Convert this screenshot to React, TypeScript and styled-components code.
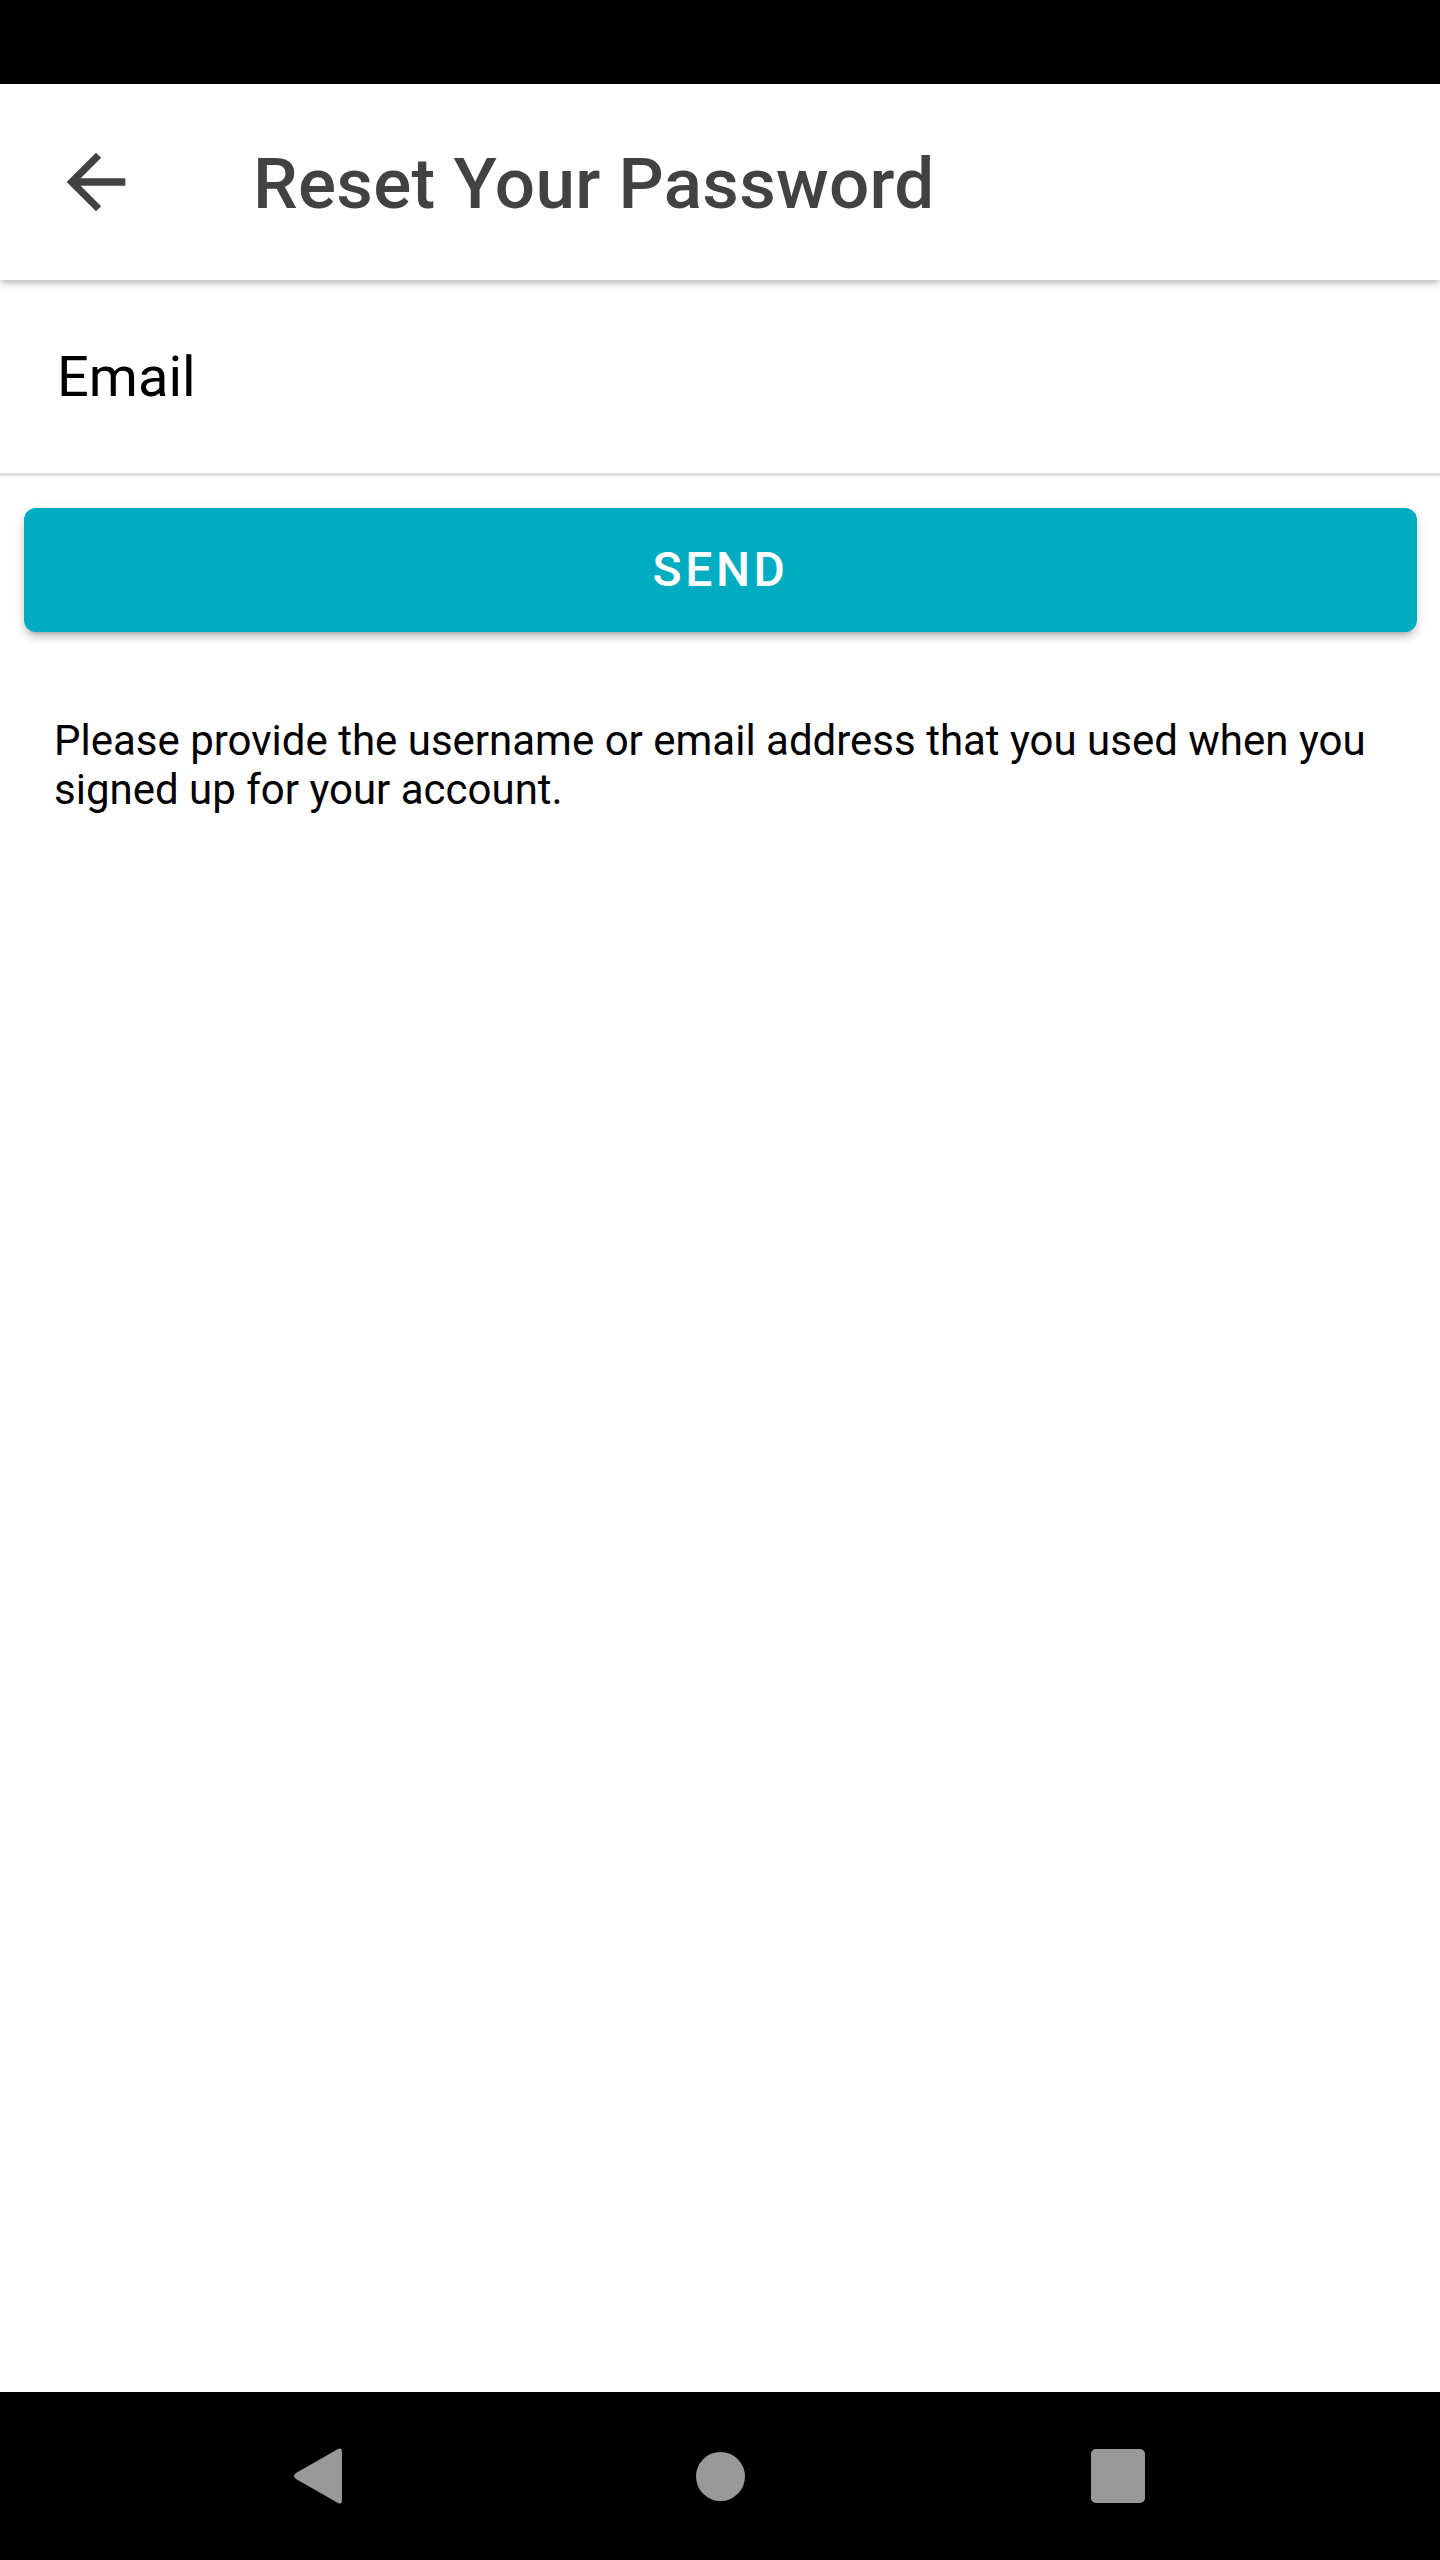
import React from "react";
import styled, { createGlobalStyle } from "styled-components";

const GlobalStyle = createGlobalStyle`
  html, body {
    margin: 0;
    padding: 0;
    background: #ffffff;
  }
  body {
    font-family: Roboto, "Noto Sans", "Liberation Sans", sans-serif;
  }
  * { box-sizing: border-box; }
`;

const Screen = styled.div`
  width: 1440px;
  min-height: 2560px;
  display: flex;
  flex-direction: column;
  background: #ffffff;
`;

const StatusBar = styled.div`
  height: 84px;
  background: #000000;
  flex-shrink: 0;
`;

const AppBar = styled.header`
  position: relative;
  z-index: 2;
  height: 196px;
  display: flex;
  align-items: center;
  background: #ffffff;
  box-shadow: 0 7px 7px -2px rgba(0, 0, 0, 0.16), 0 3px 3px rgba(0, 0, 0, 0.08);
  flex-shrink: 0;
`;

const BackButton = styled.button`
  width: 88px;
  height: 88px;
  margin-left: 52px;
  padding: 0;
  border: none;
  background: transparent;
  display: flex;
  align-items: center;
  justify-content: center;
  color: #424242;
`;

const Title = styled.h1`
  margin: 2px 0 0 113px;
  font-family: Roboto, "Liberation Sans", sans-serif;
  font-weight: 500;
  font-size: 71px;
  color: #424242;
  letter-spacing: 0.3px;
`;

const Content = styled.main`
  flex: 1;
  display: flex;
  flex-direction: column;
`;

const EmailField = styled.div`
  height: 196px;
  display: flex;
  align-items: center;
  padding-left: 57px;
  border-bottom: 3px solid #dedede;
  font-family: Roboto, "Liberation Sans", sans-serif;
  font-size: 56px;
  color: #000000;
`;

const SendButton = styled.button`
  margin: 32px 23px 0 24px;
  height: 124px;
  border: none;
  border-radius: 12px;
  background: #00acc1;
  color: #ffffff;
  font-family: Roboto, "Liberation Sans", sans-serif;
  font-weight: 500;
  font-size: 48px;
  letter-spacing: 3.6px;
  padding-bottom: 2px;
  box-shadow: 0 7px 4px -6px rgba(0, 0, 0, 0.25), 0 6px 8px rgba(0, 0, 0, 0.14),
    0 3px 14px rgba(0, 0, 0, 0.08);
`;

const HelpText = styled.p`
  margin: 84px 40px 0 54px;
  font-family: Roboto, "Liberation Sans", sans-serif;
  font-size: 42px;
  line-height: 49px;
  color: #000000;
`;

const NavBar = styled.nav`
  height: 168px;
  background: #000000;
  display: grid;
  grid-template-columns: repeat(3, 1fr);
  align-items: center;
  justify-items: center;
  flex-shrink: 0;
`;

const NavSlot = styled.div<{ $shift?: number }>`
  display: flex;
  align-items: center;
  justify-content: center;
  transform: translateX(${(p) => p.$shift ?? 0}px);
`;

const HomeDot = styled.div`
  width: 49px;
  height: 49px;
  border-radius: 50%;
  background: #999999;
`;

const RecentsSquare = styled.div`
  width: 54px;
  height: 54px;
  border-radius: 5px;
  background: #999999;
`;

export default function App() {
  return (
    <>
      <GlobalStyle />
      <Screen>
        <StatusBar />
        <AppBar>
          <BackButton aria-label="Back">
            <svg width="88" height="88" viewBox="0 0 24 24" fill="currentColor">
              <path d="M20 11H7.83l5.59-5.59L12 4l-8 8 8 8 1.41-1.41L7.83 13H20v-2z" />
            </svg>
          </BackButton>
          <Title>Reset Your Password</Title>
        </AppBar>
        <Content>
          <EmailField>Email</EmailField>
          <SendButton>SEND</SendButton>
          <HelpText>
            Please provide the username or email address that you used when you
            signed up for your account.
          </HelpText>
        </Content>
        <NavBar>
          <NavSlot $shift={78}>
            <svg width="52" height="58" viewBox="0 0 52 58">
              <path
                d="M46 2 Q50 0 50 5 L50 53 Q50 58 46 56 L4 32 Q0 29 4 26 Z"
                fill="#999999"
              />
            </svg>
          </NavSlot>
          <NavSlot>
            <HomeDot />
          </NavSlot>
          <NavSlot $shift={-82}>
            <RecentsSquare />
          </NavSlot>
        </NavBar>
      </Screen>
    </>
  );
}
